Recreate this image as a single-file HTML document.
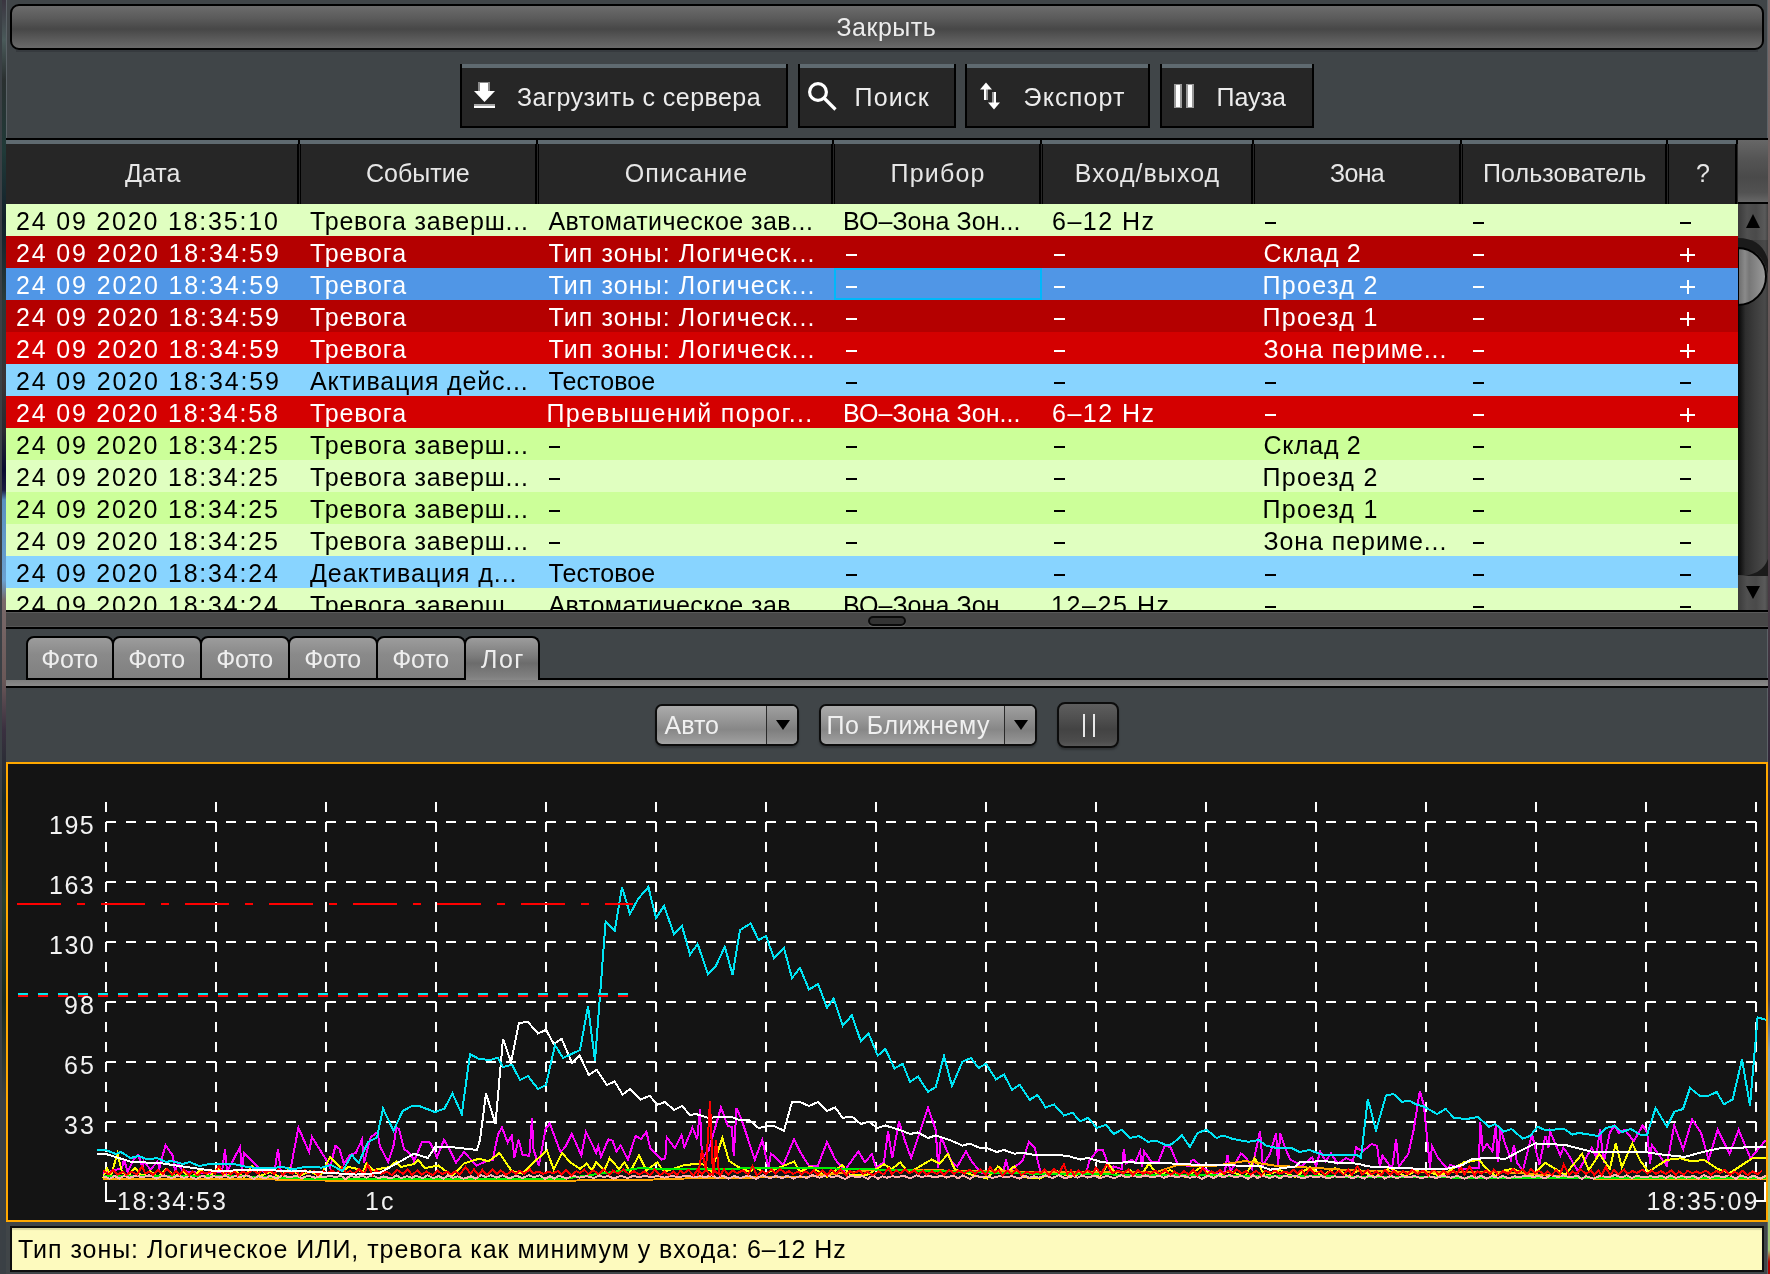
<!DOCTYPE html>
<html><head><meta charset="utf-8"><style>
html,body{margin:0;padding:0;}
body{width:1770px;height:1274px;overflow:hidden;position:relative;background:#404548;font-family:'Liberation Sans', sans-serif;}
</style></head><body>

<div style="position:absolute;left:0px;top:0px;width:6px;height:1274px;background:#3b4045"></div>
<div style="position:absolute;left:2px;top:0px;width:4px;height:1274px;background:linear-gradient(#3a3540 0px,#4a5a5a 40px,#2a3030 80px,#203a38 150px,#12202a 220px,#2a3a3a 300px,#3a3335 380px,#2a2a30 430px,#0a0a30 470px,#1a1a40 490px,#5a90c0 500px,#6aa0d0 580px,#7a6a6a 600px,#6a5858 680px,#3a3040 730px,#1a2a2a 800px,#2a4030 900px,#1a2a20 1000px,#3a4045 1100px,#3a4045 1274px)"></div>
<div style="position:absolute;left:6px;top:0px;width:1px;height:138px;background:#5a6166"></div>
<div style="position:absolute;left:1767px;top:0px;width:1px;height:1274px;background:#5c6267"></div>
<div style="position:absolute;left:1768px;top:0px;width:2px;height:1274px;background:linear-gradient(#7a6a6a 0px,#6a5a5a 300px,#4a3a45 600px,#2a2035 800px,#3a3a50 1000px,#80a0c0 1050px,#a0c878 1200px,#a0c878 1250px,#b00000 1262px,#b00000 1274px)"></div>
<div style="position:absolute;left:10px;top:4px;width:1750px;height:42px;border:2px solid #000;border-radius:9px;background:linear-gradient(#6c6c6c,#5a5a5a 30%,#474747 55%,#5b5b5b 80%,#6a6a6a)"></div>
<div style="position:absolute;left:16px;top:50px;width:1742px;height:2px;background:#363a3e"></div>
<div style="position:absolute;left:460px;top:64px;width:328px;height:64px;background:#000"></div>
<div style="position:absolute;left:462px;top:64px;width:324px;height:62px;background:#262626"></div>
<div style="position:absolute;left:462px;top:64px;width:324px;height:4px;background:#5f6a70"></div>
<div style="position:absolute;left:798px;top:64px;width:158px;height:64px;background:#000"></div>
<div style="position:absolute;left:800px;top:64px;width:154px;height:62px;background:#262626"></div>
<div style="position:absolute;left:800px;top:64px;width:154px;height:4px;background:#5f6a70"></div>
<div style="position:absolute;left:965px;top:64px;width:185px;height:64px;background:#000"></div>
<div style="position:absolute;left:967px;top:64px;width:181px;height:62px;background:#262626"></div>
<div style="position:absolute;left:967px;top:64px;width:181px;height:4px;background:#5f6a70"></div>
<div style="position:absolute;left:1160px;top:64px;width:154px;height:64px;background:#000"></div>
<div style="position:absolute;left:1162px;top:64px;width:150px;height:62px;background:#262626"></div>
<div style="position:absolute;left:1162px;top:64px;width:150px;height:4px;background:#5f6a70"></div>

<svg style="position:absolute;left:0;top:0" width="1770" height="140" shape-rendering="crispEdges">
 <g>
  <rect x="478" y="82" width="12" height="10" fill="#8a8a8a"/>
  <rect x="480" y="83" width="8" height="9" fill="#fff"/>
  <polygon points="474,91 495,91 484.5,102" fill="#fff" shape-rendering="auto"/>
  <rect x="474" y="104" width="21" height="2" fill="#a8a8a8"/>
  <rect x="474" y="106" width="21" height="2" fill="#fff"/>
 </g>
 <g fill="none" stroke="#fff" stroke-width="3.2" shape-rendering="auto">
  <circle cx="818" cy="92" r="8.4"/>
  <line x1="824.5" y1="98.5" x2="835.5" y2="109.5"/>
 </g>
 <g>
  <rect x="984" y="88" width="4" height="12" fill="#999"/>
  <rect x="984" y="88" width="2" height="12" fill="#fff"/>
  <polygon points="980,89.5 992,89.5 986,82.5" fill="#fff" shape-rendering="auto"/>
  <rect x="992" y="92" width="4" height="12" fill="#999"/>
  <rect x="994" y="92" width="2" height="12" fill="#fff"/>
  <polygon points="988,102.5 1000,102.5 994,109.5" fill="#fff" shape-rendering="auto"/>
  <rect x="1174" y="84" width="8" height="24" fill="#9a9a9a"/>
  <rect x="1176" y="85" width="4" height="22" fill="#fff"/>
  <rect x="1186" y="84" width="8" height="24" fill="#9a9a9a"/>
  <rect x="1188" y="85" width="4" height="22" fill="#fff"/>
 </g>
</svg>
<div style="position:absolute;left:6px;top:138px;width:1762px;height:2px;background:#000"></div>
<div style="position:absolute;left:6px;top:140px;width:1732px;height:64px;background:#262626"></div>
<div style="position:absolute;left:6px;top:140px;width:1732px;height:4px;background:#5f6a70"></div>
<div style="position:absolute;left:298px;top:140px;width:2px;height:4px;background:#000"></div>
<div style="position:absolute;left:297px;top:144px;width:2px;height:60px;background:#000"></div>
<div style="position:absolute;left:300px;top:144px;width:1px;height:60px;background:#000"></div>
<div style="position:absolute;left:536px;top:140px;width:2px;height:4px;background:#000"></div>
<div style="position:absolute;left:535px;top:144px;width:2px;height:60px;background:#000"></div>
<div style="position:absolute;left:538px;top:144px;width:1px;height:60px;background:#000"></div>
<div style="position:absolute;left:832px;top:140px;width:2px;height:4px;background:#000"></div>
<div style="position:absolute;left:831px;top:144px;width:2px;height:60px;background:#000"></div>
<div style="position:absolute;left:834px;top:144px;width:1px;height:60px;background:#000"></div>
<div style="position:absolute;left:1040px;top:140px;width:2px;height:4px;background:#000"></div>
<div style="position:absolute;left:1039px;top:144px;width:2px;height:60px;background:#000"></div>
<div style="position:absolute;left:1042px;top:144px;width:1px;height:60px;background:#000"></div>
<div style="position:absolute;left:1252px;top:140px;width:2px;height:4px;background:#000"></div>
<div style="position:absolute;left:1251px;top:144px;width:2px;height:60px;background:#000"></div>
<div style="position:absolute;left:1254px;top:144px;width:1px;height:60px;background:#000"></div>
<div style="position:absolute;left:1460px;top:140px;width:2px;height:4px;background:#000"></div>
<div style="position:absolute;left:1459px;top:144px;width:2px;height:60px;background:#000"></div>
<div style="position:absolute;left:1462px;top:144px;width:1px;height:60px;background:#000"></div>
<div style="position:absolute;left:1666px;top:140px;width:2px;height:4px;background:#000"></div>
<div style="position:absolute;left:1665px;top:144px;width:2px;height:60px;background:#000"></div>
<div style="position:absolute;left:1668px;top:144px;width:1px;height:60px;background:#000"></div>
<div style="position:absolute;left:1736px;top:140px;width:2px;height:4px;background:#000"></div>
<div style="position:absolute;left:1735px;top:144px;width:2px;height:60px;background:#000"></div>
<div style="position:absolute;left:1738px;top:144px;width:1px;height:60px;background:#000"></div>
<div style="position:absolute;left:1738px;top:140px;width:30px;height:62px;background:linear-gradient(#676767,#555 30%,#4a4a4a 60%,#525252 85%,#676767)"></div>
<div style="position:absolute;left:1738px;top:202px;width:30px;height:2px;background:#000"></div>
<div style="position:absolute;left:6px;top:204px;width:1732px;height:32px;background:#e0ffc0"></div>
<div style="position:absolute;left:1265px;top:222px;width:11px;height:2px;background:#000"></div>
<div style="position:absolute;left:1473px;top:222px;width:11px;height:2px;background:#000"></div>
<div style="position:absolute;left:1679.5px;top:222px;width:11px;height:2px;background:#000"></div>
<div style="position:absolute;left:6px;top:236px;width:1732px;height:32px;background:#b40000"></div>
<div style="position:absolute;left:846px;top:254px;width:11px;height:2px;background:#fff"></div>
<div style="position:absolute;left:1054px;top:254px;width:11px;height:2px;background:#fff"></div>
<div style="position:absolute;left:1473px;top:254px;width:11px;height:2px;background:#fff"></div>
<div style="position:absolute;left:1680px;top:254px;width:15px;height:2px;background:#fff"></div>
<div style="position:absolute;left:1687px;top:248px;width:2px;height:14px;background:#fff"></div>
<div style="position:absolute;left:6px;top:268px;width:1732px;height:32px;background:#5096e6"></div>
<div style="position:absolute;left:846px;top:286px;width:11px;height:2px;background:#fff"></div>
<div style="position:absolute;left:1054px;top:286px;width:11px;height:2px;background:#fff"></div>
<div style="position:absolute;left:1473px;top:286px;width:11px;height:2px;background:#fff"></div>
<div style="position:absolute;left:1680px;top:286px;width:15px;height:2px;background:#fff"></div>
<div style="position:absolute;left:1687px;top:280px;width:2px;height:14px;background:#fff"></div>
<div style="position:absolute;left:6px;top:300px;width:1732px;height:32px;background:#b40000"></div>
<div style="position:absolute;left:846px;top:318px;width:11px;height:2px;background:#fff"></div>
<div style="position:absolute;left:1054px;top:318px;width:11px;height:2px;background:#fff"></div>
<div style="position:absolute;left:1473px;top:318px;width:11px;height:2px;background:#fff"></div>
<div style="position:absolute;left:1680px;top:318px;width:15px;height:2px;background:#fff"></div>
<div style="position:absolute;left:1687px;top:312px;width:2px;height:14px;background:#fff"></div>
<div style="position:absolute;left:6px;top:332px;width:1732px;height:32px;background:#d40000"></div>
<div style="position:absolute;left:846px;top:350px;width:11px;height:2px;background:#fff"></div>
<div style="position:absolute;left:1054px;top:350px;width:11px;height:2px;background:#fff"></div>
<div style="position:absolute;left:1473px;top:350px;width:11px;height:2px;background:#fff"></div>
<div style="position:absolute;left:1680px;top:350px;width:15px;height:2px;background:#fff"></div>
<div style="position:absolute;left:1687px;top:344px;width:2px;height:14px;background:#fff"></div>
<div style="position:absolute;left:6px;top:364px;width:1732px;height:32px;background:#88d4ff"></div>
<div style="position:absolute;left:846px;top:382px;width:11px;height:2px;background:#000"></div>
<div style="position:absolute;left:1054px;top:382px;width:11px;height:2px;background:#000"></div>
<div style="position:absolute;left:1265px;top:382px;width:11px;height:2px;background:#000"></div>
<div style="position:absolute;left:1473px;top:382px;width:11px;height:2px;background:#000"></div>
<div style="position:absolute;left:1679.5px;top:382px;width:11px;height:2px;background:#000"></div>
<div style="position:absolute;left:6px;top:396px;width:1732px;height:32px;background:#d40000"></div>
<div style="position:absolute;left:1265px;top:414px;width:11px;height:2px;background:#fff"></div>
<div style="position:absolute;left:1473px;top:414px;width:11px;height:2px;background:#fff"></div>
<div style="position:absolute;left:1680px;top:414px;width:15px;height:2px;background:#fff"></div>
<div style="position:absolute;left:1687px;top:408px;width:2px;height:14px;background:#fff"></div>
<div style="position:absolute;left:6px;top:428px;width:1732px;height:32px;background:#ccff99"></div>
<div style="position:absolute;left:549px;top:446px;width:11px;height:2px;background:#000"></div>
<div style="position:absolute;left:846px;top:446px;width:11px;height:2px;background:#000"></div>
<div style="position:absolute;left:1054px;top:446px;width:11px;height:2px;background:#000"></div>
<div style="position:absolute;left:1473px;top:446px;width:11px;height:2px;background:#000"></div>
<div style="position:absolute;left:1679.5px;top:446px;width:11px;height:2px;background:#000"></div>
<div style="position:absolute;left:6px;top:460px;width:1732px;height:32px;background:#e0ffc0"></div>
<div style="position:absolute;left:549px;top:478px;width:11px;height:2px;background:#000"></div>
<div style="position:absolute;left:846px;top:478px;width:11px;height:2px;background:#000"></div>
<div style="position:absolute;left:1054px;top:478px;width:11px;height:2px;background:#000"></div>
<div style="position:absolute;left:1473px;top:478px;width:11px;height:2px;background:#000"></div>
<div style="position:absolute;left:1679.5px;top:478px;width:11px;height:2px;background:#000"></div>
<div style="position:absolute;left:6px;top:492px;width:1732px;height:32px;background:#ccff99"></div>
<div style="position:absolute;left:549px;top:510px;width:11px;height:2px;background:#000"></div>
<div style="position:absolute;left:846px;top:510px;width:11px;height:2px;background:#000"></div>
<div style="position:absolute;left:1054px;top:510px;width:11px;height:2px;background:#000"></div>
<div style="position:absolute;left:1473px;top:510px;width:11px;height:2px;background:#000"></div>
<div style="position:absolute;left:1679.5px;top:510px;width:11px;height:2px;background:#000"></div>
<div style="position:absolute;left:6px;top:524px;width:1732px;height:32px;background:#e0ffc0"></div>
<div style="position:absolute;left:549px;top:542px;width:11px;height:2px;background:#000"></div>
<div style="position:absolute;left:846px;top:542px;width:11px;height:2px;background:#000"></div>
<div style="position:absolute;left:1054px;top:542px;width:11px;height:2px;background:#000"></div>
<div style="position:absolute;left:1473px;top:542px;width:11px;height:2px;background:#000"></div>
<div style="position:absolute;left:1679.5px;top:542px;width:11px;height:2px;background:#000"></div>
<div style="position:absolute;left:6px;top:556px;width:1732px;height:32px;background:#88d4ff"></div>
<div style="position:absolute;left:846px;top:574px;width:11px;height:2px;background:#000"></div>
<div style="position:absolute;left:1054px;top:574px;width:11px;height:2px;background:#000"></div>
<div style="position:absolute;left:1265px;top:574px;width:11px;height:2px;background:#000"></div>
<div style="position:absolute;left:1473px;top:574px;width:11px;height:2px;background:#000"></div>
<div style="position:absolute;left:1679.5px;top:574px;width:11px;height:2px;background:#000"></div>
<div style="position:absolute;left:6px;top:588px;width:1732px;height:32px;background:#e0ffc0"></div>
<div style="position:absolute;left:1265px;top:606px;width:11px;height:2px;background:#000"></div>
<div style="position:absolute;left:1473px;top:606px;width:11px;height:2px;background:#000"></div>
<div style="position:absolute;left:1679.5px;top:606px;width:11px;height:2px;background:#000"></div>
<div style="position:absolute;left:834px;top:268px;width:208px;height:32px;box-sizing:border-box;border:2px solid #00b8fa"></div>
<div style="position:absolute;left:1738px;top:204px;width:30px;height:406px;background:linear-gradient(90deg,#050505,#2e2e2e 25%,#3c3c3c 55%,#4a4a4a 90%,#3a3a3a)"></div>
<div style="position:absolute;left:1738px;top:204px;width:30px;height:36px;background:linear-gradient(90deg,#3a3a3a,#505050 30%,#4a4a4a 60%,#5a5a5a 90%,#444)"></div>
<div style="position:absolute;left:1738px;top:575px;width:30px;height:35px;background:linear-gradient(90deg,#3a3a3a,#505050 30%,#4a4a4a 60%,#5a5a5a 90%,#444)"></div>
<svg style="position:absolute;left:1738px;top:204px" width="30" height="406">
 <polygon points="8,24 22,24 15,10" fill="#000"/>
 <path d="M0,34 Q24,34 30,56 L30,70 Q24,44 0,44 Z" fill="#1a1a1a"/>
 <path d="M0,44 A28,28.5 0 0 1 0,101 Z" fill="url(#tg)" stroke="#000" stroke-width="2"/>
 <defs><linearGradient id="tg" x1="0" x2="1"><stop offset="0" stop-color="#6a6a6a"/><stop offset="0.25" stop-color="#8a8a8a"/><stop offset="0.4" stop-color="#777"/><stop offset="1" stop-color="#9c9c9c"/></linearGradient></defs>
 <path d="M0,336 L0,372 L30,372 L30,355 Q24,372 0,372 Z" fill="#1a1a1a"/>
 <polygon points="8,382 22,382 15,395" fill="#000"/>
</svg>
<div style="position:absolute;left:6px;top:610px;width:1762px;height:2px;background:#000"></div>
<div style="position:absolute;left:6px;top:612px;width:1762px;height:1px;background:#5a5a5a"></div>
<div style="position:absolute;left:6px;top:613px;width:1762px;height:13px;background:#474747"></div>
<div style="position:absolute;left:6px;top:626px;width:1762px;height:1px;background:#555"></div>
<div style="position:absolute;left:6px;top:627px;width:1762px;height:2px;background:#000"></div>
<div style="position:absolute;left:868px;top:616px;width:38px;height:10px;box-sizing:border-box;border:2px solid #0a0a0a;border-radius:5px;background:#333;box-shadow:0 1px 0 #666"></div>
<div style="position:absolute;left:26px;top:678px;width:1742px;height:2px;background:#000"></div>
<div style="position:absolute;left:6px;top:680px;width:1762px;height:6px;background:linear-gradient(#7c7c7c,#8a8a8a)"></div>
<div style="position:absolute;left:6px;top:686px;width:1762px;height:2px;background:#000"></div>
<div style="position:absolute;left:26px;top:636px;width:88px;height:44px;box-sizing:border-box;border:2px solid #000;border-radius:8px 8px 0 0;background:linear-gradient(#9c9c9c,#8a8a8a 40%,#808080)"></div>
<div style="position:absolute;left:112px;top:636px;width:90px;height:44px;box-sizing:border-box;border:2px solid #000;border-radius:8px 8px 0 0;background:linear-gradient(#9c9c9c,#8a8a8a 40%,#808080)"></div>
<div style="position:absolute;left:200px;top:636px;width:90px;height:44px;box-sizing:border-box;border:2px solid #000;border-radius:8px 8px 0 0;background:linear-gradient(#9c9c9c,#8a8a8a 40%,#808080)"></div>
<div style="position:absolute;left:288px;top:636px;width:90px;height:44px;box-sizing:border-box;border:2px solid #000;border-radius:8px 8px 0 0;background:linear-gradient(#9c9c9c,#8a8a8a 40%,#808080)"></div>
<div style="position:absolute;left:376px;top:636px;width:90px;height:44px;box-sizing:border-box;border:2px solid #000;border-radius:8px 8px 0 0;background:linear-gradient(#9c9c9c,#8a8a8a 40%,#808080)"></div>
<div style="position:absolute;left:464px;top:636px;width:76px;height:44px;box-sizing:border-box;border:2px solid #000;border-bottom:none;border-radius:8px 8px 0 0;background:linear-gradient(#9c9c9c,#7a7a7a 45%,#6c6c6c 60%,#808080 92%,#888)"></div>
<div style="position:absolute;left:655px;top:704px;width:144px;height:42px;box-sizing:border-box;border:2px solid #0c0c0c;border-radius:7px;background:linear-gradient(#ababab,#9a9a9a 30%,#878787 62%,#9a9a9a 90%,#a3a3a3);box-shadow:0 2px 2px rgba(0,0,0,0.25)"></div>
<div style="position:absolute;left:766px;top:706px;width:1px;height:38px;background:#2a2a2a"></div>
<div style="position:absolute;left:767px;top:706px;width:30px;height:38px;background:linear-gradient(#a0a0a0,#8a8a8a 40%,#7e7e7e 62%,#909090 90%,#9c9c9c);border-radius:0 5px 5px 0"></div>
<svg style="position:absolute;left:774.5px;top:719px" width="16" height="12"><polygon points="1,1 15,1 8,11" fill="#000"/></svg>
<div style="position:absolute;left:819px;top:704px;width:218px;height:42px;box-sizing:border-box;border:2px solid #0c0c0c;border-radius:7px;background:linear-gradient(#ababab,#9a9a9a 30%,#878787 62%,#9a9a9a 90%,#a3a3a3);box-shadow:0 2px 2px rgba(0,0,0,0.25)"></div>
<div style="position:absolute;left:1004px;top:706px;width:1px;height:38px;background:#2a2a2a"></div>
<div style="position:absolute;left:1005px;top:706px;width:30px;height:38px;background:linear-gradient(#a0a0a0,#8a8a8a 40%,#7e7e7e 62%,#909090 90%,#9c9c9c);border-radius:0 5px 5px 0"></div>
<svg style="position:absolute;left:1012.5px;top:719px" width="16" height="12"><polygon points="1,1 15,1 8,11" fill="#000"/></svg>
<div style="position:absolute;left:1057px;top:702px;width:62px;height:46px;box-sizing:border-box;border:2px solid #0c0c0c;border-radius:8px;background:linear-gradient(#5e5e5e,#4f4f4f 35%,#434343 60%,#4c4c4c 88%,#585858);box-shadow:0 2px 2px rgba(0,0,0,0.25)"></div>
<div style="position:absolute;left:1083px;top:714px;width:2px;height:23px;background:#e8e8e8"></div>
<div style="position:absolute;left:1093px;top:714px;width:2px;height:23px;background:#e8e8e8"></div>
<div style="position:absolute;left:6px;top:762px;width:1762px;height:460px;box-sizing:border-box;border:2px solid #ffa800;background:#141414"></div>
<svg style="position:absolute;left:0;top:0" width="1770" height="1274">
<defs><clipPath id="cc"><rect x="8" y="764" width="1758" height="456"/></clipPath></defs>
<g clip-path="url(#cc)">
<line x1="106" y1="802" x2="106" y2="1182" stroke="#fff" stroke-width="2" stroke-dasharray="10 10"/>
<line x1="216" y1="802" x2="216" y2="1182" stroke="#fff" stroke-width="2" stroke-dasharray="10 10"/>
<line x1="326" y1="802" x2="326" y2="1182" stroke="#fff" stroke-width="2" stroke-dasharray="10 10"/>
<line x1="436" y1="802" x2="436" y2="1182" stroke="#fff" stroke-width="2" stroke-dasharray="10 10"/>
<line x1="546" y1="802" x2="546" y2="1182" stroke="#fff" stroke-width="2" stroke-dasharray="10 10"/>
<line x1="656" y1="802" x2="656" y2="1182" stroke="#fff" stroke-width="2" stroke-dasharray="10 10"/>
<line x1="766" y1="802" x2="766" y2="1182" stroke="#fff" stroke-width="2" stroke-dasharray="10 10"/>
<line x1="876" y1="802" x2="876" y2="1182" stroke="#fff" stroke-width="2" stroke-dasharray="10 10"/>
<line x1="986" y1="802" x2="986" y2="1182" stroke="#fff" stroke-width="2" stroke-dasharray="10 10"/>
<line x1="1096" y1="802" x2="1096" y2="1182" stroke="#fff" stroke-width="2" stroke-dasharray="10 10"/>
<line x1="1206" y1="802" x2="1206" y2="1182" stroke="#fff" stroke-width="2" stroke-dasharray="10 10"/>
<line x1="1316" y1="802" x2="1316" y2="1182" stroke="#fff" stroke-width="2" stroke-dasharray="10 10"/>
<line x1="1426" y1="802" x2="1426" y2="1182" stroke="#fff" stroke-width="2" stroke-dasharray="10 10"/>
<line x1="1536" y1="802" x2="1536" y2="1182" stroke="#fff" stroke-width="2" stroke-dasharray="10 10"/>
<line x1="1646" y1="802" x2="1646" y2="1182" stroke="#fff" stroke-width="2" stroke-dasharray="10 10"/>
<line x1="1756" y1="802" x2="1756" y2="1182" stroke="#fff" stroke-width="2" stroke-dasharray="10 10"/>
<line x1="106" y1="822" x2="1757" y2="822" stroke="#fff" stroke-width="2" stroke-dasharray="10 10"/>
<line x1="106" y1="882" x2="1757" y2="882" stroke="#fff" stroke-width="2" stroke-dasharray="10 10"/>
<line x1="106" y1="942" x2="1757" y2="942" stroke="#fff" stroke-width="2" stroke-dasharray="10 10"/>
<line x1="106" y1="1002" x2="1757" y2="1002" stroke="#fff" stroke-width="2" stroke-dasharray="10 10"/>
<line x1="106" y1="1062" x2="1757" y2="1062" stroke="#fff" stroke-width="2" stroke-dasharray="10 10"/>
<line x1="106" y1="1122" x2="1757" y2="1122" stroke="#fff" stroke-width="2" stroke-dasharray="10 10"/>
<path d="M106,1182 V1201 H116" fill="none" stroke="#fff" stroke-width="2"/>
<path d="M1756,1201 H1765 V1182" fill="none" stroke="#fff" stroke-width="2"/>
<polyline points="103.0,1173.6 122.0,1168.0 124.0,1159.0 127.5,1172.0 134.3,1158.7 138.4,1155.0 142.5,1168.0 143.8,1161.4 150.6,1169.6 157.4,1161.4 159.4,1168.0 165.5,1145.0 173.0,1156.0 175.0,1172.0 177.7,1163.5 183.0,1171.0 200.0,1173.0 222.0,1172.0 225.0,1149.0 227.0,1172.0 240.0,1147.0 242.0,1169.6 244.0,1153.0 256.4,1165.5 266.0,1173.6 275.0,1168.0 278.0,1149.0 280.8,1171.0 290.0,1172.0 298.4,1127.5 309.0,1152.0 312.0,1137.0 325.5,1158.7 330.0,1168.0 335.4,1145.8 339.5,1149.0 344.0,1164.0 350.0,1154.7 355.8,1153.0 361.9,1139.7 364.0,1162.8 370.7,1137.0 377.5,1132.3 380.0,1146.5 388.3,1162.0 393.7,1145.0 396.4,1127.5 399.0,1129.0 404.0,1149.0 411.4,1154.7 414.0,1161.4 422.0,1141.8 430.0,1142.5 437.0,1157.4 444.0,1139.7 449.3,1149.0 456.0,1162.8 464.0,1152.0 476.4,1165.5 486.0,1161.4 492.7,1160.0 498.0,1134.3 502.0,1127.5 507.6,1142.5 511.7,1135.7 514.4,1157.4 518.5,1139.7 522.5,1154.7 529.3,1156.0 532.0,1118.0 533.4,1149.0 538.8,1165.5 545.6,1129.0 549.7,1123.5 560.5,1152.0 565.0,1147.4 571.8,1133.8 581.3,1155.5 586.0,1131.8 596.2,1152.8 598.2,1146.0 601.0,1156.9 608.4,1139.2 612.5,1140.6 616.5,1151.4 620.6,1145.3 628.0,1159.6 635.5,1135.8 641.0,1139.2 646.4,1131.8 650.4,1148.7 661.3,1159.6 665.3,1158.2 666.7,1137.2 674.8,1148.0 681.6,1135.2 684.3,1147.4 692.5,1127.7 697.2,1139.2 700.0,1109.4 702.0,1158.2 708.7,1150.0 721.0,1107.4 727.7,1125.7 731.8,1127.0 733.8,1155.5 736.5,1108.0 741.3,1118.9 754.8,1159.6 762.3,1140.0 768.4,1167.7 771.0,1153.5 783.3,1165.0 794.0,1139.2 800.0,1151.4 804.0,1158.2 809.5,1166.4 817.6,1166.4 827.0,1142.0 835.3,1159.6 844.7,1170.4 858.3,1151.4 865.0,1162.3 871.9,1154.0 876.0,1167.7 884.0,1162.3 888.0,1131.0 892.2,1158.2 899.0,1121.6 904.4,1139.2 911.2,1158.2 928.0,1107.4 935.6,1129.7 938.3,1167.7 941.0,1136.5 947.8,1152.8 951.9,1162.3 957.3,1166.4 966.0,1151.4 972.2,1162.3 981.7,1173.0 1003.4,1171.8 1006.0,1159.6 1008.8,1171.8 1022.4,1161.0 1029.0,1142.0 1034.6,1147.4 1040.4,1171.8 1086.5,1171.8 1089.2,1161.0 1097.4,1150.0 1102.8,1150.0 1106.9,1161.0 1111.0,1171.8 1113.6,1166.4 1121.8,1169.0 1123.8,1149.4 1125.8,1163.6 1131.3,1159.6 1135.3,1162.3 1140.0,1151.4 1142.0,1166.4 1144.2,1151.4 1151.6,1162.3 1158.4,1161.6 1165.0,1145.3 1170.6,1147.4 1177.4,1163.6 1189.6,1166.4 1191.0,1161.0 1193.6,1159.6 1204.5,1169.0 1215.3,1174.5 1224.8,1171.8 1227.5,1155.5 1230.3,1171.8 1241.0,1153.5 1246.5,1158.2 1252.0,1169.0 1260.0,1131.0 1262.8,1165.0 1270.0,1154.0 1276.1,1133.1 1278.1,1165.0 1280.2,1133.1 1284.9,1147.4 1290.3,1159.6 1295.8,1162.3 1301.2,1166.4 1312.0,1157.5 1316.1,1166.4 1320.2,1151.4 1325.6,1161.0 1331.0,1153.5 1337.8,1163.6 1346.0,1158.2 1352.7,1161.0 1356.1,1147.4 1362.2,1151.4 1371.7,1144.0 1377.1,1146.0 1379.8,1166.4 1382.5,1155.5 1392.0,1169.0 1396.1,1139.2 1398.8,1166.4 1408.3,1154.0 1413.7,1129.7 1419.8,1091.1 1423.9,1105.3 1430.0,1167.7 1432.0,1146.0 1438.1,1158.2 1447.6,1169.0 1450.3,1165.0 1462.5,1169.0 1478.8,1167.7 1480.2,1121.6 1482.9,1150.0 1487.0,1144.0 1492.4,1151.4 1495.8,1125.7 1497.8,1162.3 1500.5,1128.4 1505.0,1143.4 1511.0,1159.9 1514.0,1144.9 1517.0,1162.9 1523.0,1170.3 1532.0,1134.4 1539.4,1164.4 1545.4,1135.9 1548.4,1147.9 1550.0,1131.4 1560.4,1155.4 1563.4,1147.9 1567.9,1153.9 1578.4,1171.8 1582.9,1162.9 1591.8,1147.9 1596.3,1156.9 1600.0,1129.2 1603.8,1162.9 1609.8,1132.9 1614.3,1125.4 1618.8,1132.9 1624.8,1129.9 1633.8,1141.1 1642.7,1125.4 1647.2,1132.9 1650.2,1164.4 1651.7,1144.9 1666.7,1165.8 1674.2,1125.4 1683.2,1149.4 1692.1,1119.4 1701.1,1132.9 1708.6,1159.9 1717.6,1129.9 1729.6,1153.9 1738.6,1129.9 1750.5,1158.4 1765.5,1140.4" fill="none" stroke="#ff00ff" stroke-width="2" stroke-linejoin="miter" shape-rendering="crispEdges"/>
<polyline points="103.0,1178.0 107.0,1168.0 111.0,1176.0 117.4,1153.3 122.0,1172.0 128.0,1176.0 135.0,1168.0 142.0,1176.0 150.0,1171.0 158.0,1177.0 166.0,1169.0 175.0,1176.0 183.0,1172.0 192.0,1177.0 200.0,1170.0 210.0,1176.0 218.0,1168.0 226.0,1176.0 235.0,1171.0 244.0,1177.0 252.0,1166.0 260.0,1176.0 270.0,1172.0 280.0,1177.0 290.0,1168.0 300.0,1176.0 310.0,1171.0 320.0,1177.0 330.0,1157.0 343.6,1171.0 347.6,1167.0 354.4,1168.0 362.5,1172.0 366.6,1163.5 373.4,1170.0 389.7,1167.0 396.4,1161.4 400.5,1167.0 414.0,1164.0 418.0,1160.0 425.0,1168.0 438.5,1165.5 452.0,1176.0 464.0,1163.5 479.0,1158.7 488.6,1161.4 499.5,1153.0 511.7,1171.0 522.5,1173.6 534.7,1161.4 547.0,1150.6 553.7,1169.6 561.9,1153.0 570.4,1162.3 580.0,1169.0 586.7,1163.6 592.0,1170.4 596.2,1162.3 604.3,1170.4 609.7,1158.2 619.0,1169.0 624.7,1162.3 630.0,1171.8 639.0,1155.5 646.4,1170.4 657.2,1162.3 664.0,1171.8 684.3,1165.0 702.0,1163.6 711.4,1171.8 722.3,1137.9 729.0,1160.9 737.2,1166.4 749.4,1171.8 756.0,1167.7 765.7,1173.0 794.0,1161.6 800.0,1171.8 811.0,1166.4 827.0,1177.2 842.0,1165.0 850.0,1174.5 867.8,1174.5 884.0,1164.3 892.0,1169.0 900.3,1162.3 908.5,1173.0 931.5,1159.6 939.7,1163.6 947.8,1154.0 954.6,1169.0 970.8,1174.5 987.0,1178.6 998.0,1166.4 1006.0,1173.0 1014.2,1166.4 1023.7,1177.2 1040.0,1178.6 1055.0,1170.0 1070.0,1177.0 1085.0,1172.0 1100.0,1177.0 1108.0,1163.6 1118.0,1176.0 1130.0,1170.0 1140.0,1177.0 1149.0,1163.6 1158.0,1176.0 1170.0,1170.0 1185.0,1177.0 1200.0,1168.0 1215.0,1176.0 1230.0,1171.0 1245.0,1177.0 1254.7,1158.2 1265.0,1176.0 1280.0,1170.0 1295.0,1177.0 1310.0,1167.0 1322.0,1176.0 1335.0,1168.0 1348.0,1176.0 1360.0,1170.0 1375.0,1177.0 1390.0,1168.0 1405.0,1176.0 1420.0,1169.0 1440.0,1176.0 1463.9,1162.3 1473.4,1161.0 1478.8,1159.6 1485.6,1167.7 1495.0,1176.0 1505.0,1170.3 1512.5,1168.8 1532.0,1176.3 1545.4,1162.9 1565.0,1174.8 1582.0,1153.9 1588.8,1170.3 1599.3,1153.9 1609.8,1168.8 1615.8,1143.4 1621.8,1167.3 1632.3,1143.4 1639.8,1159.9 1648.7,1171.8 1666.7,1159.9 1680.2,1158.4 1692.1,1161.4 1704.1,1159.9 1717.6,1168.8 1729.6,1173.3 1752.0,1158.4 1765.5,1158.4" fill="none" stroke="#ffff00" stroke-width="2" stroke-linejoin="miter" shape-rendering="crispEdges"/>
<polyline points="103.0,1178.5 250.0,1179.0 330.0,1180.6 565.0,1180.6 638.0,1180.0 700.6,1178.0 805.0,1177.0 874.6,1169.7 935.6,1170.4 1040.0,1171.8 1157.0,1171.8 1177.4,1165.0 1211.3,1166.4 1245.2,1161.0 1275.0,1165.7 1310.7,1167.7 1365.0,1171.0 1405.6,1171.8 1510.0,1172.5 1600.0,1179.0 1766.0,1179.0" fill="none" stroke="#ffa500" stroke-width="2" stroke-linejoin="miter" shape-rendering="crispEdges"/>
<polyline points="103.0,1176.0 250.0,1176.5 330.0,1179.5 565.0,1178.6 638.0,1168.4 700.6,1169.0 805.0,1167.7 1040.0,1173.8 1270.0,1176.0 1400.0,1177.0 1500.0,1178.0 1766.0,1178.0" fill="none" stroke="#00ee00" stroke-width="2" stroke-linejoin="miter" shape-rendering="crispEdges"/>
<polyline points="103.0,1176.0 109.7,1178.7 114.5,1176.1 119.5,1178.5 124.2,1175.7 129.5,1177.9 136.7,1175.5 141.9,1177.3 149.2,1175.3 156.4,1178.5 164.0,1175.3 171.3,1178.0 178.2,1175.6 183.7,1177.9 189.0,1176.2 196.1,1179.0 202.8,1175.6 207.5,1178.4 213.3,1176.2 219.4,1177.5 225.2,1175.6 229.9,1178.0 234.9,1176.1 240.4,1177.1 247.0,1175.1 253.8,1178.9 258.1,1176.2 265.3,1178.3 270.1,1175.8 277.5,1178.6 282.4,1175.2 289.2,1177.3 296.9,1175.6 301.9,1178.2 308.2,1175.6 315.0,1177.7 320.3,1176.2 324.9,1177.5 329.3,1175.5 335.5,1177.1 341.2,1175.9 345.5,1179.0 350.1,1176.0 356.4,1177.2 362.3,1175.9 366.6,1177.7 372.5,1175.0 378.5,1178.3 383.7,1176.4 391.2,1178.5 396.3,1175.4 401.5,1178.2 406.9,1176.1 411.9,1177.7 416.2,1175.8 423.1,1178.2 427.4,1175.3 433.3,1178.1 438.7,1176.0 443.4,1178.7 448.0,1175.2 453.3,1177.8 457.6,1176.2 463.4,1178.8 471.1,1176.3 475.8,1178.6 481.2,1175.1 485.8,1177.0 490.9,1175.2 496.8,1177.7 502.3,1175.3 509.1,1178.3 516.6,1175.7 522.4,1178.1 528.9,1175.2 533.5,1177.3 539.6,1175.3 544.9,1178.9 550.1,1176.3 554.5,1178.5 559.0,1175.4 566.8,1178.6 572.6,1175.5 579.3,1177.6 586.3,1176.2 594.1,1177.9 599.2,1175.3 603.5,1177.1 608.6,1175.9 613.7,1178.7 620.9,1175.8 627.9,1178.0 633.0,1175.8 639.2,1177.4 644.7,1175.7 651.0,1177.1 658.1,1176.1 664.5,1177.6 671.8,1175.7 679.0,1177.4 685.9,1175.5 693.6,1177.0 700.9,1176.2 705.6,1177.1 711.6,1175.1 717.6,1178.2 722.7,1175.7 728.5,1178.5 733.9,1176.1 740.6,1177.9 748.1,1175.4 755.6,1178.9 762.8,1175.2 769.6,1178.3 775.9,1176.0 782.7,1178.2 787.1,1175.5 793.1,1178.6 800.5,1175.9 806.5,1178.1 812.2,1175.1 819.8,1177.7 826.4,1175.1 832.0,1177.2 837.9,1175.8 844.9,1179.0 850.7,1175.8 857.6,1177.2 862.6,1176.2 867.9,1178.9 872.8,1175.1 877.8,1178.9 882.3,1176.2 886.7,1177.8 891.7,1176.2 898.4,1177.1 903.4,1175.6 910.0,1178.4 916.7,1175.3 921.5,1177.1 927.9,1175.7 935.0,1177.3 941.7,1175.8 946.8,1177.6 953.1,1175.6 958.3,1178.4 962.8,1175.5 970.1,1178.9 975.2,1175.3 980.5,1177.2 986.3,1176.3 992.6,1177.8 999.3,1176.1 1004.8,1177.0 1012.2,1176.3 1019.3,1178.6 1025.1,1175.8 1029.3,1178.0 1034.4,1176.2 1038.7,1177.7 1045.6,1175.4 1052.4,1178.1 1058.9,1175.1 1065.3,1178.5 1071.2,1175.6 1077.7,1177.8 1081.9,1175.3 1087.7,1177.6 1093.9,1175.8 1100.2,1178.1 1107.3,1175.8 1114.2,1178.4 1121.0,1175.2 1127.2,1177.4 1132.3,1175.8 1139.7,1177.1 1145.2,1175.4 1152.4,1177.3 1159.4,1175.8 1163.8,1177.8 1170.9,1175.4 1176.6,1177.1 1183.4,1175.8 1189.8,1177.8 1197.1,1176.2 1201.6,1178.9 1207.9,1175.8 1214.0,1178.0 1218.4,1175.3 1223.5,1177.2 1229.2,1175.1 1235.0,1177.1 1242.2,1176.1 1248.2,1178.9 1253.0,1175.3 1257.2,1178.1 1262.5,1175.4 1269.1,1178.0 1275.4,1176.1 1280.1,1178.4 1284.5,1175.7 1290.7,1177.1 1295.0,1175.5 1302.4,1178.4 1310.2,1176.2 1316.7,1177.4 1321.4,1176.1 1328.4,1178.4 1334.7,1176.3 1340.7,1177.3 1347.2,1176.1 1353.0,1178.5 1357.6,1175.8 1364.2,1178.6 1369.3,1175.4 1374.3,1177.6 1380.5,1175.3 1384.7,1178.6 1391.0,1175.8 1396.7,1178.4 1401.9,1176.2 1407.7,1177.1 1415.1,1176.2 1421.5,1178.3 1429.0,1176.2 1436.3,1177.9 1443.1,1175.7 1450.8,1177.7 1457.6,1175.9 1464.6,1178.7 1471.9,1175.6 1476.7,1178.1 1481.1,1175.6 1486.4,1178.6 1492.1,1176.1 1498.4,1177.8 1502.7,1176.0 1508.6,1178.4 1514.4,1176.3 1519.3,1177.2 1525.7,1175.5 1533.3,1177.0 1538.1,1175.9 1545.0,1178.5 1550.8,1175.1 1558.4,1177.1 1563.2,1175.3 1569.8,1177.5 1577.1,1175.7 1581.7,1179.0 1586.1,1176.1 1593.5,1178.7 1600.7,1175.5 1607.6,1177.4 1615.2,1175.0 1622.0,1177.5 1626.6,1175.2 1631.9,1178.1 1636.3,1175.8 1643.6,1177.2 1651.0,1176.3 1656.4,1177.3 1660.9,1175.5 1665.8,1178.0 1670.5,1175.4 1676.4,1177.8 1682.0,1175.9 1686.8,1177.6 1693.5,1175.7 1698.2,1178.7 1703.7,1175.2 1710.2,1177.7 1716.4,1175.8 1724.0,1177.2 1729.0,1175.1 1736.1,1178.7 1740.7,1175.4 1748.0,1177.8 1753.9,1175.7 1760.2,1178.7 1766.0,1175.8" fill="none" stroke="#ffb0b0" stroke-width="2" stroke-linejoin="miter" shape-rendering="crispEdges"/>
<polyline points="103.0,1170.5 108.6,1174.2 113.2,1170.2 117.7,1174.6 123.0,1171.5 126.4,1175.0 131.4,1171.7 137.2,1174.6 142.0,1166.1 145.3,1173.5 149.1,1171.7 153.4,1175.1 158.0,1170.0 162.9,1174.1 166.8,1169.0 172.2,1174.8 176.2,1171.2 179.6,1174.9 183.8,1169.4 189.5,1175.1 192.7,1171.2 197.1,1175.5 201.3,1171.6 206.6,1173.7 210.0,1170.9 215.2,1173.3 219.0,1164.9 222.6,1174.4 227.0,1171.3 230.5,1174.6 233.9,1170.6 237.8,1175.4 243.1,1170.9 246.9,1174.0 252.3,1170.0 258.1,1173.5 262.0,1169.6 265.9,1173.2 269.3,1170.2 274.1,1173.9 278.5,1169.1 283.2,1175.2 286.8,1171.4 292.2,1173.6 295.8,1169.7 299.5,1175.4 305.1,1170.1 308.5,1173.1 314.2,1171.1 318.1,1175.1 322.8,1171.0 327.9,1173.2 331.7,1170.2 336.5,1173.7 342.1,1167.3 346.5,1173.2 350.1,1170.8 353.6,1173.9 359.2,1169.1 364.2,1174.5 367.7,1164.4 372.8,1175.4 376.0,1170.0 381.1,1173.8 386.9,1171.6 392.1,1175.3 397.2,1169.8 402.8,1173.9 407.8,1169.3 412.1,1175.0 417.6,1170.2 421.8,1174.5 426.6,1171.6 432.4,1175.2 437.5,1170.7 442.2,1174.1 447.7,1171.6 450.9,1174.5 455.3,1171.2 459.8,1174.5 465.5,1167.1 470.4,1173.5 474.1,1169.3 478.4,1175.2 482.4,1169.9 486.7,1175.0 492.4,1169.3 497.1,1173.8 500.6,1170.4 506.0,1174.8 511.8,1171.0 516.1,1173.7 519.9,1170.6 524.3,1173.8 529.8,1169.1 533.1,1173.1 538.6,1171.7 543.3,1173.8 548.6,1171.7 553.0,1173.1 558.4,1171.1 561.6,1174.6 566.0,1170.0 571.3,1175.4 576.3,1171.2 579.9,1173.0 584.4,1169.8 588.3,1173.9 593.3,1170.3 598.5,1174.0 603.8,1169.3 609.4,1174.8 612.9,1170.5 618.5,1173.9 623.2,1169.3 628.9,1174.2 633.8,1171.2 639.2,1174.6 644.3,1171.2 650.1,1175.4 654.7,1169.6 660.3,1175.1 664.4,1171.6 669.0,1174.9 673.5,1171.7 676.8,1175.0 680.4,1170.9 684.0,1173.4 688.5,1169.8 693.5,1175.4 698.0,1169.1 701.7,1174.3 705.7,1169.8 710.2,1175.1 714.9,1170.9 720.3,1175.3 724.0,1169.4 728.6,1174.4 732.3,1170.3 737.1,1173.1 742.8,1170.4 748.2,1174.4 752.6,1166.1 756.9,1175.4 762.5,1171.0 766.0,1174.1 771.4,1169.3 775.4,1173.5 780.2,1169.2 785.5,1173.1 789.1,1171.2 793.2,1173.9 798.0,1171.5 801.5,1174.3 805.3,1171.2 809.6,1173.9 813.9,1170.3 817.6,1174.6 822.5,1170.3 827.3,1175.1 831.0,1169.7 836.6,1173.8 840.6,1169.2 846.5,1175.2 850.0,1171.1 853.8,1173.2 859.2,1170.6 862.7,1174.0 867.7,1171.8 872.7,1175.3 878.5,1171.5 883.7,1174.3 888.7,1168.0 891.9,1174.4 896.5,1170.2 900.1,1173.5 905.5,1169.0 909.0,1173.2 914.7,1170.5 918.7,1174.2 923.2,1170.6 926.4,1174.8 931.9,1171.3 937.0,1174.0 940.7,1171.3 943.9,1175.2 949.2,1169.8 954.0,1174.0 958.8,1170.4 964.1,1173.6 969.7,1169.7 975.1,1174.0 980.7,1169.3 985.9,1174.9 990.1,1167.0 994.5,1173.0 998.7,1170.0 1002.4,1175.4 1007.4,1170.9 1012.1,1174.3 1016.3,1169.0 1021.3,1174.9 1027.1,1171.7 1032.3,1173.6 1036.5,1171.7 1040.7,1173.2 1044.5,1169.3 1049.0,1175.4 1053.7,1169.0 1059.0,1173.2 1063.8,1164.3 1067.4,1174.2 1071.0,1170.4 1074.3,1175.4 1078.6,1170.3 1082.7,1173.7 1087.6,1170.2 1092.7,1173.7 1095.9,1167.8 1101.1,1174.0 1106.7,1164.1 1112.4,1173.2 1118.0,1170.6 1123.7,1173.6 1128.3,1169.2 1132.7,1175.4 1138.1,1170.1 1142.9,1174.1 1146.6,1171.7 1150.1,1174.1 1155.0,1170.5 1159.8,1174.0 1165.0,1170.3 1170.7,1174.8 1174.5,1171.5 1179.8,1174.6 1183.9,1171.0 1188.6,1174.5 1193.4,1169.7 1197.3,1175.4 1202.9,1168.2 1206.8,1174.1 1211.6,1171.5 1215.0,1173.2 1219.9,1170.3 1224.1,1174.2 1227.8,1170.8 1233.2,1173.2 1236.7,1169.5 1241.9,1173.5 1246.2,1171.1 1250.4,1174.6 1256.2,1170.9 1261.3,1175.3 1265.6,1170.8 1271.2,1173.2 1274.5,1170.2 1279.5,1173.7 1284.8,1171.6 1289.7,1173.2 1293.7,1169.8 1297.6,1173.4 1301.7,1169.8 1305.2,1174.8 1309.9,1169.2 1315.5,1174.1 1320.8,1170.9 1325.0,1175.3 1330.6,1171.1 1334.7,1173.9 1339.0,1170.7 1343.6,1175.0 1348.2,1169.5 1351.9,1174.9 1357.4,1166.2 1362.0,1174.4 1367.8,1170.0 1371.1,1174.4 1376.4,1171.6 1381.5,1175.2 1384.9,1170.0 1390.1,1174.6 1393.9,1171.2 1398.4,1174.9 1402.6,1170.9 1407.6,1174.2 1412.2,1169.8 1417.8,1174.0 1423.2,1169.9 1428.5,1175.1 1434.1,1169.1 1438.6,1174.8 1444.0,1170.6 1447.5,1174.9 1453.3,1170.7 1457.0,1174.1 1461.0,1167.1 1464.4,1174.6 1469.7,1166.4 1474.4,1175.3 1477.7,1171.5 1481.4,1173.6 1486.5,1170.1 1490.1,1173.7 1493.7,1169.7 1498.4,1175.0 1502.8,1171.1 1508.4,1173.9 1513.1,1169.1 1516.8,1173.1 1522.5,1169.6 1527.1,1174.3 1531.0,1169.0 1534.8,1173.0 1539.2,1170.8 1544.3,1174.5 1547.9,1171.4 1551.7,1175.2 1556.2,1170.0 1560.1,1174.3 1563.7,1164.8 1569.1,1175.1 1572.5,1171.0 1575.9,1174.2 1580.3,1169.1 1585.8,1173.8 1591.1,1170.6 1594.4,1175.1 1598.2,1170.3 1601.7,1175.1 1605.7,1167.1 1610.1,1174.8 1614.3,1169.9 1618.5,1174.2 1624.2,1169.5 1627.4,1173.9 1632.5,1171.1 1636.9,1173.0 1642.7,1169.6 1647.5,1173.7 1651.7,1170.3 1655.7,1174.0 1660.7,1171.1 1665.8,1173.8 1671.5,1170.2 1675.6,1175.1 1679.0,1171.4 1683.9,1174.8 1687.6,1170.7 1692.3,1173.2 1696.1,1171.4 1700.3,1173.2 1706.0,1170.6 1710.9,1174.9 1716.2,1170.7 1720.5,1173.0 1724.7,1169.8 1730.0,1174.7 1734.8,1171.7 1738.9,1174.6 1742.3,1170.7 1747.6,1175.1 1752.4,1171.4 1758.0,1174.4 1762.1,1170.4" fill="none" stroke="#ff0000" stroke-width="2" stroke-linejoin="miter" shape-rendering="crispEdges"/>
<polyline points="97.0,1154.0 106.0,1154.0 131.7,1162.0 159.5,1163.0 182.7,1166.5 215.0,1171.0 252.0,1170.0 298.5,1171.0 356.0,1174.6 379.5,1173.0 414.0,1153.7 428.0,1158.0 435.0,1147.0 451.0,1147.0 476.8,1150.0 480.0,1140.0 486.0,1093.5 495.5,1124.0 503.0,1038.8 511.0,1062.0 519.0,1023.0 528.0,1022.0 538.0,1033.6 546.0,1029.7 553.8,1044.0 561.6,1038.8 572.0,1063.0 579.7,1055.6 588.8,1075.0 596.6,1069.8 607.0,1085.0 614.7,1081.5 622.5,1094.5 630.0,1089.0 640.6,1099.6 649.7,1095.8 657.5,1104.8 665.0,1102.0 674.0,1110.0 682.0,1106.0 690.0,1115.0 696.0,1114.0 708.0,1117.8 731.0,1116.5 739.0,1120.0 749.4,1120.0 758.5,1128.0 772.7,1125.5 784.0,1130.7 792.0,1102.0 800.0,1102.0 809.0,1106.0 818.0,1102.0 827.0,1111.0 835.0,1107.4 842.7,1117.8 851.8,1116.5 860.8,1124.0 868.6,1121.6 877.7,1128.0 885.4,1125.5 900.0,1130.0 910.0,1134.0 918.0,1132.4 928.0,1138.0 935.8,1135.4 951.0,1140.5 962.5,1145.6 970.0,1143.6 979.0,1147.6 986.6,1148.0 996.8,1152.0 1004.0,1150.0 1014.6,1153.7 1022.0,1152.7 1032.0,1154.5 1052.7,1154.5 1068.0,1156.0 1080.7,1159.6 1088.0,1157.8 1101.0,1162.0 1113.7,1163.4 1129.0,1162.0 1144.0,1163.4 1169.7,1163.4 1195.0,1164.7 1260.0,1166.0 1270.0,1169.7 1295.8,1166.4 1299.8,1162.3 1324.2,1161.0 1337.8,1163.0 1358.0,1163.6 1367.6,1166.4 1405.6,1168.4 1446.3,1169.0 1462.5,1165.0 1470.7,1159.6 1489.7,1157.5 1505.0,1159.0 1519.0,1151.5 1535.0,1143.4 1565.0,1144.9 1594.8,1152.4 1617.3,1152.4 1647.2,1152.4 1662.2,1154.6 1684.7,1156.9 1707.1,1150.9 1722.0,1147.9 1766.0,1147.1" fill="none" stroke="#ffffff" stroke-width="2" stroke-linejoin="miter" shape-rendering="crispEdges"/>
<polyline points="97.0,1150.0 106.0,1150.0 115.5,1154.0 121.0,1152.0 130.5,1158.0 138.6,1156.0 148.0,1159.5 157.0,1158.0 166.0,1162.0 171.0,1161.0 182.7,1164.0 189.6,1162.0 199.0,1166.0 210.0,1164.0 224.0,1164.0 233.6,1164.0 247.5,1167.0 256.8,1168.0 275.0,1168.0 282.0,1166.5 291.5,1169.5 307.7,1166.5 321.6,1167.6 331.0,1165.0 342.5,1171.0 351.8,1155.0 358.7,1163.0 368.0,1142.0 377.0,1137.5 383.0,1108.6 393.5,1130.6 402.7,1111.0 412.0,1106.0 419.0,1106.0 435.0,1112.0 444.4,1108.6 452.5,1093.5 461.8,1114.0 470.0,1054.0 479.0,1059.0 490.7,1060.0 497.7,1057.6 503.0,1067.0 512.0,1064.7 520.0,1080.0 528.0,1076.0 538.0,1089.0 546.0,1085.0 555.0,1045.0 563.0,1058.0 580.0,1050.0 588.0,1006.0 595.0,1061.0 605.6,922.0 614.7,931.0 622.0,887.0 630.0,914.0 638.0,899.0 648.4,887.0 656.0,918.0 664.0,906.0 674.0,934.0 682.0,926.0 690.0,954.6 697.6,944.0 708.0,974.0 715.8,966.0 724.8,946.8 732.6,975.0 740.0,930.0 750.7,923.5 758.5,940.0 766.0,936.0 774.0,958.0 784.0,948.0 792.0,978.0 800.0,968.0 809.0,989.5 818.0,984.0 827.0,1007.7 833.6,998.6 842.7,1025.8 851.8,1015.4 860.8,1041.0 868.6,1033.6 877.7,1055.6 885.4,1049.0 894.5,1068.5 902.7,1063.7 910.0,1082.0 918.0,1076.5 928.0,1091.7 935.8,1087.0 944.0,1056.0 952.0,1086.0 962.5,1061.7 970.9,1058.0 978.5,1068.0 986.0,1063.7 996.0,1079.5 1004.0,1074.4 1012.0,1090.0 1019.7,1084.6 1029.8,1099.8 1037.5,1094.8 1045.6,1107.5 1054.0,1104.4 1064.0,1115.6 1072.6,1112.6 1080.0,1121.5 1087.8,1118.0 1097.0,1127.8 1106.0,1124.8 1113.7,1134.0 1121.4,1129.8 1130.0,1138.0 1139.0,1136.0 1148.0,1141.8 1155.7,1140.5 1167.0,1145.6 1172.0,1144.0 1182.0,1135.4 1190.0,1146.9 1197.6,1132.9 1206.6,1129.8 1216.7,1138.0 1223.0,1135.4 1233.0,1139.0 1248.5,1141.8 1258.7,1140.0 1266.3,1145.6 1276.5,1148.0 1291.7,1148.0 1299.4,1152.0 1309.5,1150.0 1322.0,1154.5 1330.0,1155.0 1357.0,1155.0 1361.0,1157.7 1367.8,1099.0 1376.0,1130.4 1386.0,1095.6 1393.4,1093.9 1402.0,1101.8 1409.5,1100.6 1415.8,1104.3 1424.5,1106.8 1437.0,1114.0 1445.6,1109.0 1454.3,1118.0 1466.7,1119.0 1478.0,1117.0 1489.0,1126.7 1495.3,1124.0 1504.0,1131.6 1511.5,1129.0 1522.7,1138.6 1530.0,1136.0 1537.6,1126.7 1546.0,1130.4 1563.7,1128.7 1572.4,1134.6 1578.6,1132.9 1598.5,1136.0 1606.0,1128.0 1614.6,1126.0 1622.0,1132.0 1630.8,1129.0 1640.7,1135.0 1647.0,1135.0 1655.6,1108.0 1666.8,1126.7 1674.3,1111.8 1683.0,1109.0 1690.0,1088.0 1700.0,1096.0 1709.0,1095.6 1716.6,1091.9 1724.0,1104.3 1732.7,1099.3 1742.0,1059.5 1750.0,1105.5 1757.6,1017.3 1766.0,1019.8" fill="none" stroke="#00e5f5" stroke-width="2" stroke-linejoin="miter" shape-rendering="crispEdges"/>
<polyline points="698.0,1176.0 702.0,1150.0 706.0,1170.0 710.0,1101.0 713.0,1176.0 716.0,1140.0 719.0,1174.0" fill="none" stroke="#ff0000" stroke-width="2" stroke-linejoin="miter" shape-rendering="crispEdges"/>
<line x1="17" y1="904" x2="633" y2="904" stroke="#ff0000" stroke-width="2" stroke-dasharray="44 16 8 16"/>
<line x1="18" y1="994" x2="628" y2="994" stroke="#00e8f0" stroke-width="2" stroke-dasharray="10 10"/>
<line x1="18" y1="996" x2="628" y2="996" stroke="#ff0000" stroke-width="2" stroke-dasharray="10 10"/>
</g></svg>
<div style="position:absolute;left:10px;top:1226px;width:1754px;height:46px;box-sizing:border-box;border:2px solid #0e0e0e;background:#fdfabe;box-shadow:inset 0 2px 1px #d9d6a0"></div>
<div style="position:absolute;left:0;top:0;width:1770px;height:1274px;will-change:transform"><div style="position:absolute;left:836.50px;top:7px;line-height:40px;font-size:25px;letter-spacing:0.500px;color:#ececec;white-space:nowrap">Закрыть</div>
<div style="position:absolute;left:517.00px;top:77px;line-height:40px;font-size:25px;letter-spacing:0.444px;color:#ececec;white-space:nowrap">Загрузить с сервера</div>
<div style="position:absolute;left:854.50px;top:77px;line-height:40px;font-size:25px;letter-spacing:1.250px;color:#ececec;white-space:nowrap">Поиск</div>
<div style="position:absolute;left:1023.50px;top:77px;line-height:40px;font-size:25px;letter-spacing:1.167px;color:#ececec;white-space:nowrap">Экспорт</div>
<div style="position:absolute;left:1216.50px;top:77px;line-height:40px;font-size:25px;letter-spacing:0.000px;color:#ececec;white-space:nowrap">Пауза</div>
<div style="position:absolute;left:125.00px;top:153px;line-height:40px;font-size:25px;letter-spacing:0.000px;color:#e6e6e6;white-space:nowrap">Дата</div>
<div style="position:absolute;left:366.00px;top:153px;line-height:40px;font-size:25px;letter-spacing:0.000px;color:#e6e6e6;white-space:nowrap">Событие</div>
<div style="position:absolute;left:624.75px;top:153px;line-height:40px;font-size:25px;letter-spacing:1.071px;color:#e6e6e6;white-space:nowrap">Описание</div>
<div style="position:absolute;left:890.50px;top:153px;line-height:40px;font-size:25px;letter-spacing:1.200px;color:#e6e6e6;white-space:nowrap">Прибор</div>
<div style="position:absolute;left:1074.75px;top:153px;line-height:40px;font-size:25px;letter-spacing:1.056px;color:#e6e6e6;white-space:nowrap">Вход/выход</div>
<div style="position:absolute;left:1330.00px;top:153px;line-height:40px;font-size:25px;letter-spacing:-0.667px;color:#e6e6e6;white-space:nowrap">Зона</div>
<div style="position:absolute;left:1483.00px;top:153px;line-height:40px;font-size:25px;letter-spacing:0.091px;color:#e6e6e6;white-space:nowrap">Пользователь</div>
<div style="position:absolute;left:1696.00px;top:153px;line-height:40px;font-size:25px;letter-spacing:0.000px;color:#e6e6e6;white-space:nowrap">?</div>
<div style="position:absolute;left:16.00px;top:201px;line-height:40px;font-size:25px;letter-spacing:1.806px;color:#000;white-space:nowrap">24 09 2020 18:35:10</div>
<div style="position:absolute;left:310.00px;top:201px;line-height:40px;font-size:25px;letter-spacing:0.812px;color:#000;white-space:nowrap">Тревога заверш...</div>
<div style="position:absolute;left:548.50px;top:201px;line-height:40px;font-size:25px;letter-spacing:0.450px;color:#000;white-space:nowrap">Автоматическое зав...</div>
<div style="position:absolute;left:843.00px;top:201px;line-height:40px;font-size:25px;letter-spacing:0.077px;color:#000;white-space:nowrap">ВО–Зона Зон...</div>
<div style="position:absolute;left:1052.00px;top:201px;line-height:40px;font-size:25px;letter-spacing:1.500px;color:#000;white-space:nowrap">6–12 Hz</div>
<div style="position:absolute;left:16.00px;top:233px;line-height:40px;font-size:25px;letter-spacing:1.861px;color:#fff;white-space:nowrap">24 09 2020 18:34:59</div>
<div style="position:absolute;left:310.00px;top:233px;line-height:40px;font-size:25px;letter-spacing:0.833px;color:#fff;white-space:nowrap">Тревога</div>
<div style="position:absolute;left:548.50px;top:233px;line-height:40px;font-size:25px;letter-spacing:1.100px;color:#fff;white-space:nowrap">Тип зоны: Логическ...</div>
<div style="position:absolute;left:1263.50px;top:233px;line-height:40px;font-size:25px;letter-spacing:0.667px;color:#fff;white-space:nowrap">Склад 2</div>
<div style="position:absolute;left:16.00px;top:265px;line-height:40px;font-size:25px;letter-spacing:1.861px;color:#fff;white-space:nowrap">24 09 2020 18:34:59</div>
<div style="position:absolute;left:310.00px;top:265px;line-height:40px;font-size:25px;letter-spacing:0.833px;color:#fff;white-space:nowrap">Тревога</div>
<div style="position:absolute;left:548.50px;top:265px;line-height:40px;font-size:25px;letter-spacing:1.100px;color:#fff;white-space:nowrap">Тип зоны: Логическ...</div>
<div style="position:absolute;left:1262.50px;top:265px;line-height:40px;font-size:25px;letter-spacing:1.357px;color:#fff;white-space:nowrap">Проезд 2</div>
<div style="position:absolute;left:16.00px;top:297px;line-height:40px;font-size:25px;letter-spacing:1.861px;color:#fff;white-space:nowrap">24 09 2020 18:34:59</div>
<div style="position:absolute;left:310.00px;top:297px;line-height:40px;font-size:25px;letter-spacing:0.833px;color:#fff;white-space:nowrap">Тревога</div>
<div style="position:absolute;left:548.50px;top:297px;line-height:40px;font-size:25px;letter-spacing:1.100px;color:#fff;white-space:nowrap">Тип зоны: Логическ...</div>
<div style="position:absolute;left:1262.50px;top:297px;line-height:40px;font-size:25px;letter-spacing:1.357px;color:#fff;white-space:nowrap">Проезд 1</div>
<div style="position:absolute;left:16.00px;top:329px;line-height:40px;font-size:25px;letter-spacing:1.861px;color:#fff;white-space:nowrap">24 09 2020 18:34:59</div>
<div style="position:absolute;left:310.00px;top:329px;line-height:40px;font-size:25px;letter-spacing:0.833px;color:#fff;white-space:nowrap">Тревога</div>
<div style="position:absolute;left:548.50px;top:329px;line-height:40px;font-size:25px;letter-spacing:1.100px;color:#fff;white-space:nowrap">Тип зоны: Логическ...</div>
<div style="position:absolute;left:1263.50px;top:329px;line-height:40px;font-size:25px;letter-spacing:0.923px;color:#fff;white-space:nowrap">Зона периме...</div>
<div style="position:absolute;left:16.00px;top:361px;line-height:40px;font-size:25px;letter-spacing:1.861px;color:#000;white-space:nowrap">24 09 2020 18:34:59</div>
<div style="position:absolute;left:310.00px;top:361px;line-height:40px;font-size:25px;letter-spacing:0.812px;color:#000;white-space:nowrap">Активация дейс...</div>
<div style="position:absolute;left:548.50px;top:361px;line-height:40px;font-size:25px;letter-spacing:0.071px;color:#000;white-space:nowrap">Тестовое</div>
<div style="position:absolute;left:16.00px;top:393px;line-height:40px;font-size:25px;letter-spacing:1.806px;color:#fff;white-space:nowrap">24 09 2020 18:34:58</div>
<div style="position:absolute;left:310.00px;top:393px;line-height:40px;font-size:25px;letter-spacing:0.833px;color:#fff;white-space:nowrap">Тревога</div>
<div style="position:absolute;left:546.50px;top:393px;line-height:40px;font-size:25px;letter-spacing:1.333px;color:#fff;white-space:nowrap">Превышений порог...</div>
<div style="position:absolute;left:843.00px;top:393px;line-height:40px;font-size:25px;letter-spacing:0.077px;color:#fff;white-space:nowrap">ВО–Зона Зон...</div>
<div style="position:absolute;left:1052.00px;top:393px;line-height:40px;font-size:25px;letter-spacing:1.500px;color:#fff;white-space:nowrap">6–12 Hz</div>
<div style="position:absolute;left:16.00px;top:425px;line-height:40px;font-size:25px;letter-spacing:1.806px;color:#000;white-space:nowrap">24 09 2020 18:34:25</div>
<div style="position:absolute;left:310.00px;top:425px;line-height:40px;font-size:25px;letter-spacing:0.812px;color:#000;white-space:nowrap">Тревога заверш...</div>
<div style="position:absolute;left:1263.50px;top:425px;line-height:40px;font-size:25px;letter-spacing:0.667px;color:#000;white-space:nowrap">Склад 2</div>
<div style="position:absolute;left:16.00px;top:457px;line-height:40px;font-size:25px;letter-spacing:1.806px;color:#000;white-space:nowrap">24 09 2020 18:34:25</div>
<div style="position:absolute;left:310.00px;top:457px;line-height:40px;font-size:25px;letter-spacing:0.812px;color:#000;white-space:nowrap">Тревога заверш...</div>
<div style="position:absolute;left:1262.50px;top:457px;line-height:40px;font-size:25px;letter-spacing:1.357px;color:#000;white-space:nowrap">Проезд 2</div>
<div style="position:absolute;left:16.00px;top:489px;line-height:40px;font-size:25px;letter-spacing:1.806px;color:#000;white-space:nowrap">24 09 2020 18:34:25</div>
<div style="position:absolute;left:310.00px;top:489px;line-height:40px;font-size:25px;letter-spacing:0.812px;color:#000;white-space:nowrap">Тревога заверш...</div>
<div style="position:absolute;left:1262.50px;top:489px;line-height:40px;font-size:25px;letter-spacing:1.357px;color:#000;white-space:nowrap">Проезд 1</div>
<div style="position:absolute;left:16.00px;top:521px;line-height:40px;font-size:25px;letter-spacing:1.806px;color:#000;white-space:nowrap">24 09 2020 18:34:25</div>
<div style="position:absolute;left:310.00px;top:521px;line-height:40px;font-size:25px;letter-spacing:0.812px;color:#000;white-space:nowrap">Тревога заверш...</div>
<div style="position:absolute;left:1263.50px;top:521px;line-height:40px;font-size:25px;letter-spacing:0.923px;color:#000;white-space:nowrap">Зона периме...</div>
<div style="position:absolute;left:16.00px;top:553px;line-height:40px;font-size:25px;letter-spacing:1.806px;color:#000;white-space:nowrap">24 09 2020 18:34:24</div>
<div style="position:absolute;left:310.00px;top:553px;line-height:40px;font-size:25px;letter-spacing:0.933px;color:#000;white-space:nowrap">Деактивация д...</div>
<div style="position:absolute;left:548.50px;top:553px;line-height:40px;font-size:25px;letter-spacing:0.071px;color:#000;white-space:nowrap">Тестовое</div>
<div style="position:absolute;left:16.00px;top:585px;line-height:40px;font-size:25px;letter-spacing:1.806px;color:#000;white-space:nowrap">24 09 2020 18:34:24</div>
<div style="position:absolute;left:310.00px;top:585px;line-height:40px;font-size:25px;letter-spacing:0.812px;color:#000;white-space:nowrap">Тревога заверш...</div>
<div style="position:absolute;left:548.50px;top:585px;line-height:40px;font-size:25px;letter-spacing:0.450px;color:#000;white-space:nowrap">Автоматическое зав...</div>
<div style="position:absolute;left:843.00px;top:585px;line-height:40px;font-size:25px;letter-spacing:0.077px;color:#000;white-space:nowrap">ВО–Зона Зон...</div>
<div style="position:absolute;left:1051.00px;top:585px;line-height:40px;font-size:25px;letter-spacing:1.571px;color:#000;white-space:nowrap">12–25 Hz</div>
<div style="position:absolute;left:41.25px;top:639px;line-height:40px;font-size:25px;letter-spacing:-0.167px;color:#eeeeee;white-space:nowrap">Фото</div>
<div style="position:absolute;left:128.25px;top:639px;line-height:40px;font-size:25px;letter-spacing:-0.167px;color:#eeeeee;white-space:nowrap">Фото</div>
<div style="position:absolute;left:216.25px;top:639px;line-height:40px;font-size:25px;letter-spacing:-0.167px;color:#eeeeee;white-space:nowrap">Фото</div>
<div style="position:absolute;left:304.25px;top:639px;line-height:40px;font-size:25px;letter-spacing:-0.167px;color:#eeeeee;white-space:nowrap">Фото</div>
<div style="position:absolute;left:392.25px;top:639px;line-height:40px;font-size:25px;letter-spacing:-0.167px;color:#eeeeee;white-space:nowrap">Фото</div>
<div style="position:absolute;left:481.00px;top:639px;line-height:40px;font-size:25px;letter-spacing:1.500px;color:#eeeeee;white-space:nowrap">Лог</div>
<div style="position:absolute;left:664.50px;top:705px;line-height:40px;font-size:25px;letter-spacing:0.000px;color:#f0f0f0;white-space:nowrap">Авто</div>
<div style="position:absolute;left:826.50px;top:705px;line-height:40px;font-size:25px;letter-spacing:0.500px;color:#f0f0f0;white-space:nowrap">По Ближнему</div>
<div style="position:absolute;left:49.00px;top:805px;line-height:40px;font-size:25px;letter-spacing:1.500px;color:#f2f2f2;white-space:nowrap">195</div>
<div style="position:absolute;left:49.00px;top:865px;line-height:40px;font-size:25px;letter-spacing:1.500px;color:#f2f2f2;white-space:nowrap">163</div>
<div style="position:absolute;left:49.00px;top:925px;line-height:40px;font-size:25px;letter-spacing:1.500px;color:#f2f2f2;white-space:nowrap">130</div>
<div style="position:absolute;left:64.00px;top:985px;line-height:40px;font-size:25px;letter-spacing:2.000px;color:#f2f2f2;white-space:nowrap">98</div>
<div style="position:absolute;left:64.00px;top:1045px;line-height:40px;font-size:25px;letter-spacing:2.000px;color:#f2f2f2;white-space:nowrap">65</div>
<div style="position:absolute;left:64.00px;top:1105px;line-height:40px;font-size:25px;letter-spacing:2.000px;color:#f2f2f2;white-space:nowrap">33</div>
<div style="position:absolute;left:117.00px;top:1181px;line-height:40px;font-size:25px;letter-spacing:1.643px;color:#f2f2f2;white-space:nowrap">18:34:53</div>
<div style="position:absolute;left:1646.50px;top:1181px;line-height:40px;font-size:25px;letter-spacing:1.929px;color:#f2f2f2;white-space:nowrap">18:35:09</div>
<div style="position:absolute;left:365.00px;top:1181px;line-height:40px;font-size:25px;letter-spacing:2.000px;color:#f2f2f2;white-space:nowrap">1с</div>
<div style="position:absolute;left:18.00px;top:1229px;line-height:40px;font-size:25px;letter-spacing:0.951px;color:#000;white-space:nowrap">Тип зоны: Логическое ИЛИ, тревога как минимум у входа: 6–12 Hz</div></div>
<div style="position:absolute;left:6px;top:610px;width:1762px;height:2px;background:#000"></div><div style="position:absolute;left:6px;top:612px;width:1762px;height:1px;background:#5a5a5a"></div><div style="position:absolute;left:6px;top:613px;width:1762px;height:13px;background:#474747"></div><div style="position:absolute;left:6px;top:626px;width:1762px;height:1px;background:#555"></div><div style="position:absolute;left:6px;top:627px;width:1762px;height:2px;background:#000"></div><div style="position:absolute;left:868px;top:616px;width:38px;height:10px;box-sizing:border-box;border:2px solid #0a0a0a;border-radius:5px;background:#333;box-shadow:0 1px 0 #666"></div></body></html>
